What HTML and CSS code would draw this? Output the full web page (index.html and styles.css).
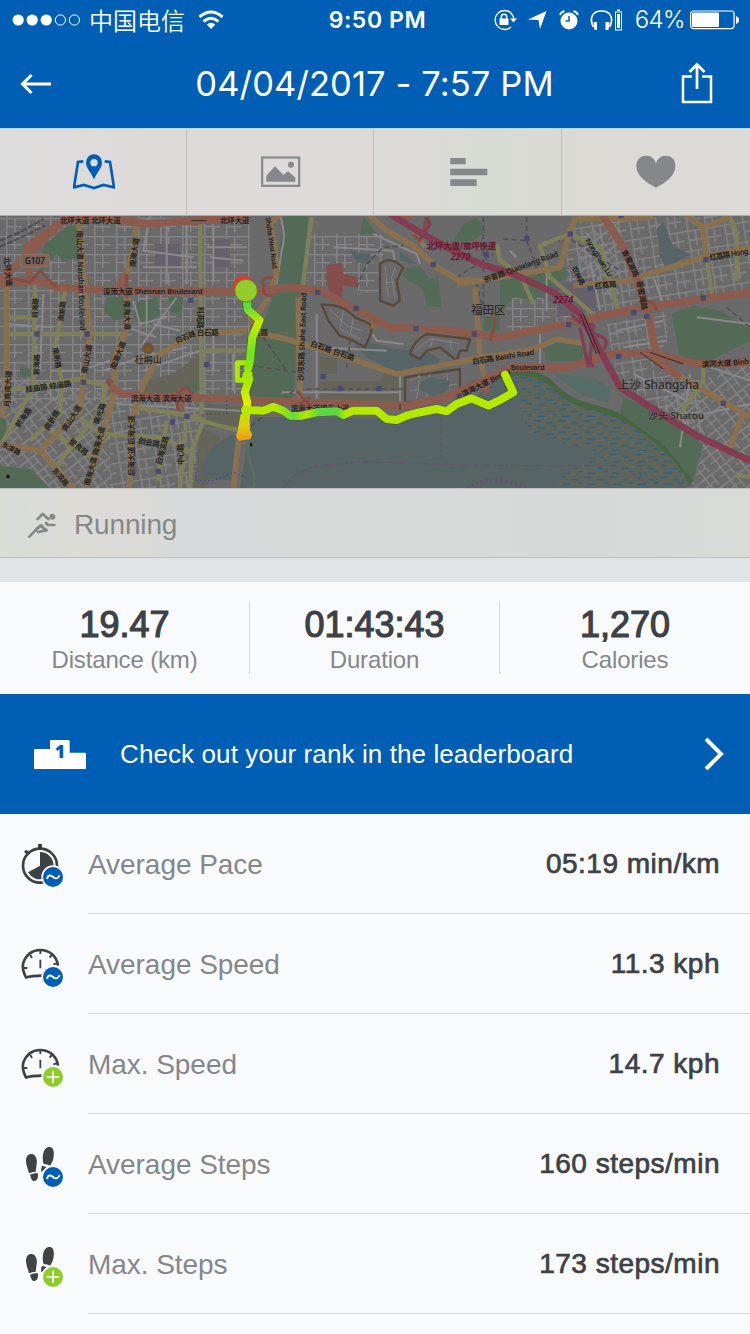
FILE: index.html
```html
<!DOCTYPE html>
<html lang="en">
<head>
<meta charset="utf-8">
<title>Running activity</title>
<link rel="stylesheet" href="styles.css">
</head>
<body>
<svg class="defs" width="0" height="0" aria-hidden="true">
  <defs>
    <g id="avg"><circle cx="159" cy="549" r="35" fill="#f9fafc"/><circle cx="159" cy="549" r="30" fill="#005fb5"/><path d="M141 555C144 541 153 543 159 549S174 556 179 543" fill="none" stroke="#fff" stroke-width="5.5"/></g>
    <g id="max"><circle cx="159" cy="549" r="35" fill="#f9fafc"/><circle cx="159" cy="549" r="30" fill="#8dcc2c"/><path d="M159 530V568M140 549H178" fill="none" stroke="#fff" stroke-width="5"/></g>
    <g id="gauge"><path d="M79 552C68 532 66 517 71 503C78 483 96 468 120 468C147 468 170 484 174 515M76 551C92 546 108 545 126 545" fill="none" stroke="#3d4145" stroke-width="8"/><path d="M121 470V480M91 483L96 492M156 482L149 491M72 522H82M160 511L171 508M121 497V523" fill="none" stroke="#3d4145" stroke-width="5.5"/></g>
    <g id="feet" fill="#3f4346"><path d="M94 480C106 480 113 495 110 511C108 522 108 529 107 533Q97 534 87 538C84 525 78 513 78 500C78 488 84 480 94 480ZM90 542Q101 538 113 537C116 550 112 560 103 561C95 561 93 553 90 542Z"/><path d="M149 459C159 459 163 470 161 486C160 501 154 508 151 515Q142 510 131 510C128 503 127 489 130 477C133 466 140 458 149 459ZM126 515L142 520L124 535Q122 524 126 515Z"/></g>
  </defs>
</svg>
<main class="app">
  <header class="top">
    <div class="status">
      <div class="status-left">
        <svg width="69" height="14" viewBox="0 0 69 14"><g fill="#fff"><circle cx="6.2" cy="7" r="5.6"/><circle cx="20.2" cy="7" r="5.6"/><circle cx="34.2" cy="7" r="5.6"/></g><g fill="none" stroke="#fff"><circle cx="48.4" cy="7" r="5.1"/><circle cx="62.400" cy="7" r="5.1"/></g></svg>
        <span class="carrier">中国电信</span>
        <svg class="wifi" width="26" height="20" viewBox="0 0 26 20"><g fill="none" stroke="#fff" stroke-width="3"><path d="M1.500 7Q13-3 24.500 7"/><path d="M5.500 11.500Q13 5 20.500 11.500"/></g><path d="M8.700 14.500Q13 11 17.300 14.500L13 19Z" fill="#fff"/></svg>
      </div>
      <span class="time">9:50 PM</span>
      <div class="status-right">
        <svg class="lock" width="24" height="22" viewBox="0 0 24 22"><path d="M18 4A9.500 9.500 0 1 0 18 18M18 4Q20.800 7 20.800 11" fill="none" stroke="#fff" stroke-width="1.400"/><path d="M17 9.500H24L20.500 13.500Z" fill="#fff"/><rect x="6.500" y="9.500" width="9" height="6.500" rx=".8" fill="#fff"/><path d="M8.300 10V8A2.700 2.700 0 0 1 13.700 8V10" fill="none" stroke="#fff" stroke-width="1.500"/></svg>
        <svg class="loc" width="19" height="18" viewBox="0 0 19 18"><path d="M18.500 0L12 18L10.500 9L0 8.500Z" fill="#fff"/></svg>
        <svg class="alarm" width="20" height="20" viewBox="0 0 20 20"><circle cx="10" cy="11" r="8.500" fill="#fff"/><path d="M10 6V11H6.500" fill="none" stroke="#005fb5" stroke-width="1.500"/><path d="M1 5Q2 2 5.500 1.200M19 5Q18 2 14.500 1.200" fill="none" stroke="#fff" stroke-width="1.800"/></svg>
        <svg class="phones" width="33" height="22" viewBox="0 0 33 22"><path d="M3.500 18C-1 10 2 2 11.500 2S24 10 19.500 18" fill="none" stroke="#fff" stroke-width="1.700"/><path d="M3.500 13H7V21H4.500ZM19.500 13H15.500V21H18.500Z" fill="#fff"/><rect x="25.500" y="3" width="6" height="18" fill="none" stroke="#fff"/><path d="M27 5H30V19H27ZM27 .5H30V2H27Z" fill="#fff"/></svg>
        <span class="pct">64%</span>
        <svg width="49" height="20" viewBox="0 0 49 20"><rect x=".6" y="1" width="43.500" height="17.600" rx="3" fill="none" stroke="#fff" stroke-width="1.200"/><rect x="2" y="2.500" width="27" height="14.600" rx="1" fill="#fff"/><path d="M46 6Q49 7 49 10T46 14Z" fill="#fff"/></svg>
      </div>
    </div>
    <nav class="navbar">
      <svg width="32" height="22" viewBox="0 0 32 22"><path d="M11.500 2L2.500 11L11.500 20M2.500 11H31" fill="none" stroke="#fff" stroke-width="3"/></svg>
      <h1>04/04/2017 - 7:57 PM</h1>
      <svg class="share" width="32" height="42" viewBox="0 0 32 42"><path d="M11 14.500H2V40H30V14.500H21" fill="none" stroke="#fff" stroke-width="2.500"/><path d="M16 27V3M8.500 10L16 2.500L23.500 10" fill="none" stroke="#fff" stroke-width="2.700"/></svg>
    </nav>
  </header>

  <section class="tabs">
    <div class="tab"><svg width="42" height="36" viewBox="219 75 126 108"><path d="M250 97L234 99L222 175L252 168L282 177L310 168L342 175L330 99L314 97" fill="none" stroke="#005fb5" stroke-width="8"/><path fill-rule="evenodd" d="M282 76A24 24 0 0 0 258 101C258 117 272 128 282 151C292 128 306 117 306 101A24 24 0 0 0 282 76ZM282 90A11 11 0 1 1 282 112A11 11 0 1 1 282 90Z" fill="#005fb5"/></svg></div>
    <div class="tab"><svg width="40" height="32" viewBox="782 85 120 96"><rect x="785.500" y="89.500" width="111" height="85" fill="none" stroke="#85878a" stroke-width="6.500"/><circle cx="872" cy="111" r="9" fill="#85878a"/><path d="M798 162V144L824 116L849 142L863 131L885 150V162Z" fill="#85878a"/></svg></div>
    <div class="tab"><svg width="38" height="30" viewBox="226 88 114 90"><path d="M227 91H273V110H227ZM227 123H338V143H227ZM227 155H306V175H227Z" fill="#85878a"/></svg></div>
    <div class="tab"><svg width="40" height="34" viewBox="782 82 120 102"><path d="M842 180C812 163 783 145 783 114C783 91 801 83 814 84C830 85 840 96 842 108C844 96 854 85 870 84C883 83 900 91 900 114C900 145 872 163 842 180Z" fill="#85878a"/></svg></div>
  </section>

  <section class="map">
    <svg width="750" height="272" viewBox="0 6 2250 816">
      <defs>
        <pattern id="grid" width="66" height="54" patternUnits="userSpaceOnUse"><path d="M0 14H66M20 0V54M44 14V54M20 38H66" class="street"/></pattern>
        <pattern id="grid2" width="58" height="48" patternUnits="userSpaceOnUse" patternTransform="rotate(-38)"><path d="M0 10H58M18 0V48M40 10V48M0 32H40" class="street"/></pattern>
        <pattern id="grid3" width="56" height="60" patternUnits="userSpaceOnUse" patternTransform="rotate(-9)"><path d="M0 14H56M14 0V60M36 14V60M14 42H56" class="street"/></pattern>
        <pattern id="marsh" width="76" height="34" patternUnits="userSpaceOnUse"><path d="M4 8H26M42 15H62M14 29H40M62 25H76" stroke="#315f7c" stroke-width="4"/></pattern>
        <linearGradient id="run" gradientUnits="userSpaceOnUse" x1="0" y1="280" x2="0" y2="680"><stop offset="0" stop-color="#5edc35"/><stop offset=".12" stop-color="#c6ec00"/><stop offset=".35" stop-color="#6be51a"/><stop offset=".55" stop-color="#a8ea00"/><stop offset=".72" stop-color="#e2ee00"/><stop offset=".85" stop-color="#b2e800"/><stop offset="1" stop-color="#efa818"/></linearGradient>
        <linearGradient id="tail" gradientUnits="userSpaceOnUse" x1="0" y1="590" x2="0" y2="680"><stop offset="0" stop-color="#b9e800"/><stop offset=".5" stop-color="#dfcf08"/><stop offset="1" stop-color="#f0951e"/></linearGradient>
        <linearGradient id="east" gradientUnits="userSpaceOnUse" x1="735" y1="0" x2="2050" y2="0"><stop offset="0" stop-color="#b5e800"/><stop offset=".07" stop-color="#b5e800"/><stop offset=".11" stop-color="#63dc35"/><stop offset=".14" stop-color="#b5e800"/><stop offset=".17" stop-color="#58da40"/><stop offset=".21" stop-color="#58da40"/><stop offset=".23" stop-color="#b5e800"/><stop offset=".8" stop-color="#b5ea00"/><stop offset="1" stop-color="#d4f000"/></linearGradient>
      </defs>
      <rect y="0" width="2250" height="830" fill="#6b6a6b"/>
      <path fill="url(#grid)" d="M0 0H750V560H0ZM920 60H1150V240L920 210ZM1520 250H1740V330L1520 360Z"/>
      <path fill="url(#grid2)" d="M0 480L330 540L330 822H0ZM1740 60L1860 0V240H1740ZM1980 560L2250 430V822H2060Z"/>
      <path fill="url(#grid3)" d="M330 560H600V822H330ZM1700 20L2250 0V230L1700 310ZM1820 330L2000 290V450L1850 480ZM1840 440L2100 500L2110 660L1900 540Z"/>
      <path fill="#646558" d="M520 480L600 420V530L430 545L440 500ZM960 430H1010V480H960ZM960 500H1200V570H960ZM1145 480H1200V530H1145ZM620 570L730 580V640H620ZM600 640L660 670L620 822H580Z"/>
      <path fill="#66606a" d="M465 90H540V165H465ZM1570 230L1790 190V290L1670 310V270ZM630 80L690 75V160H640Z"/>
      <path class="park" d="M130 95L205 35H232V130L190 145L170 120L120 180ZM320 250L370 248L390 310L340 320L312 290ZM410 265L470 250L480 300L430 335L400 310ZM505 245L550 250L545 305L505 290ZM850 6H925L905 210H825ZM825 235H898L880 555L740 545L760 400ZM1090 6L1130 60L1080 60ZM1210 165L1260 155L1290 195L1315 190L1325 280L1280 275L1270 225L1210 190ZM1360 80L1390 30L1430 10L1460 50L1420 80ZM1500 180L1560 185L1680 150L1710 180L1600 260L1540 250L1500 300ZM1630 405L1670 385L1755 395L1745 440L1640 440ZM2015 300L2080 275L2160 290L2250 345V380L2110 450L2040 435ZM1450 310L1500 300V350H1450ZM0 755L90 765L150 822H0ZM0 600L20 620L15 700H0ZM555 510L600 495L590 535L550 530ZM60 460L95 465L90 490L60 485Z"/>
      <path class="water" d="M720 822L740 700L760 610L1180 612L1330 590L1430 545L1510 475L1600 480L1750 570L1860 600L1980 680L2080 800L2060 822Z"/>
      <path fill="#5e655c" d="M1550 500L1620 490L1700 545L1900 610L1990 700L2060 790V822H1660L1690 780L1820 720L1700 690L1580 655L1560 580Z"/>
      <path fill="url(#marsh)" d="M1520 490H1620L1740 575L1900 610L2070 790V822H1660L1690 780L1820 720L1700 690L1580 655L1560 560Z"/>
      <path fill="#566c66" d="M1660 480L1780 490L1830 520L1830 570L1740 540Z"/>
      <path d="M1510 480Q1600 465 1650 505Q1700 560 1760 575Q1900 605 1990 700Q2040 740 2075 805" class="coast"/>
      <path class="park" d="M1870 550L1970 590L2110 690L2080 800L1990 690L1860 600Z"/>
      <path class="water" d="M1040 92L1070 115L1110 120L1115 150L1070 145ZM1200 110L1220 125L1250 150L1200 140ZM1065 395L1100 385L1200 408L1270 405L1320 435L1310 465L1200 480L1100 430ZM1970 45L1990 25L2020 100L2070 120L2000 165L1980 130ZM620 720L650 690L700 660L720 680V740L700 800L600 790Z"/>
      <path d="M840 6Q860 60 845 110L830 210M905 290L898 560M845 535H1200V590M950 300V560M1200 480V590M1380 465V555M150 470H240L330 440M630 130L730 140M450 6L430 110L580 130M500 30V210M560 10V210M430 160H590M640 40V200M620 100H740M420 400L530 250M20 330L160 340M130 240L120 470M400 260L420 330L500 310M310 470L420 430L560 400M430 470L600 410M350 570L720 590M1120 60L1250 120L1260 150M1000 100L1180 110L1190 200M1640 150V290M1770 140L1800 290M1530 110L1550 130M1960 190L1990 270M2090 310L2250 330M2040 430L2250 500M1620 360V460M700 420V530M640 340V470" class="minor"/>
      <path d="M440 230V340M460 330L540 350M240 230L250 330M380 340L470 370M950 400L1160 410M1110 350L1130 380L1210 390M1900 480L2080 570M1850 350L1990 320M1870 400L2000 380M2070 480L2040 700M2110 600L2250 570" class="minor"/>
      <g class="dash"><path d="M1580 10V80L1500 75M1580 80L1620 190M1450 10V290L1430 210M1070 220L1100 150L1150 100L1210 95M1060 300L1040 460M750 455L900 475M790 370L860 470M920 525L1240 525L1270 555M1370 190L1480 120M880 530L750 640M1640 80H1720L1860 170M2180 280L2250 340"/></g>
      <g class="tan"><path d="M1140 150Q1160 130 1190 145L1210 160L1190 200L1200 260L1180 275L1140 260Z"/><path d="M965 272Q1030 270 1065 310L1110 330L1115 355L1095 400L1060 380L1020 365L985 320Z"/><path d="M1230 420Q1240 380 1280 360L1410 375L1400 410L1380 410L1370 440L1320 400L1280 410L1260 435Z"/><path d="M1215 490L1380 465V545L1300 560L1215 565Z"/></g>
      <path class="lanes" d="M1155 155L1165 250M1185 160L1175 190L1185 255M1155 205H1180M990 285L1040 335L1090 350M1030 290L1020 345L1080 375M1060 315L1050 365M1245 410L1290 375L1330 380L1380 390M1300 370L1290 400M1350 378L1355 410M1230 500L1260 485L1250 555M1290 480L1280 550M1340 480L1350 540M1230 530L1370 510"/>
      <path class="water" d="M1265 505L1290 490L1350 500L1345 530L1300 545L1255 525Z"/>
      <path fill="#844c4b" d="M980 155L1025 145L1030 180L1075 190L1070 220L1030 215L1025 250L990 245L980 200Z"/>
      <g class="yellow"><path d="M600 20L605 600M105 210L100 520L5 690M195 230L175 350L165 400L185 500L180 600L90 680M20 360L380 360M30 310H100M10 530L100 520L230 495L320 515L300 590L165 760M610 410H740M400 580L540 600L640 630L740 655M240 610L300 660L480 670L570 710M580 600L610 620L575 710L570 822M500 620L475 800M560 600L540 822M150 650L290 740M935 10L905 240M1275 100L1240 50M1600 270L1560 180L1500 140L1490 90M1630 90L1710 60L1800 100L1855 290M1650 190L1620 95L1640 90M2110 60L2135 240M2190 10L2210 60V200M2040 600L2110 500V460M1620 95L1650 190L1785 305M2205 780L2250 790"/></g>
      <g class="orange"><path d="M235 20L255 220L270 360L250 500L240 590L120 710L0 690M410 10L405 90L375 200L385 330L345 430L340 540L310 660L260 822M20 160L20 560L0 610M740 350L580 360L480 420L430 510L395 620L388 822M120 710L220 822M750 355L840 370L1010 420L1190 480L1450 430L1600 405L1670 375L1755 390M840 0L810 30L825 100L830 180L800 260L750 330M895 250L900 560M1110 6L1160 50L1240 95L1310 160L1380 200H1440L1680 160L1710 50L1725 15L1960 10M1370 210L1470 195M1720 215L1880 200L2110 130L2250 100M2060 6L2110 40L2190 10M1425 220L1440 430L1460 520M2000 460L2080 510L2250 610M2230 600L2190 700M720 640L700 822M2110 40L2120 130"/></g>
      <g class="red"><path d="M0 210L110 200L170 220L300 228L750 235L870 220L960 230L1170 340L1300 345L1500 370L1700 330L1900 285L2250 235M90 200L80 100L190 20L0 200M20 210V160M190 15L390 20L430 30L750 10M330 520L370 540L500 550L740 555L760 560L1220 575L1340 550L1450 500L1540 460L1700 460L1840 420L1940 415L2090 450L2250 445M905 555L910 580M1805 0L1870 100L1920 220L1945 300L1970 430M380 180L360 210L390 240M1940 415L2040 490M540 590L545 530L570 545M1180 6H1240M1450 500L1460 540"/></g>
      <g class="redthin"><path d="M20 190L90 205L120 170L170 220M380 180V245L360 220M330 515Q310 490 340 505M535 590Q520 530 560 520L580 540M820 190Q770 190 795 220M820 245Q780 245 795 220M890 530L935 580M900 570L930 550M1920 265Q1960 250 1970 290M1470 380Q1500 300 1470 310M1280 10L1260 80L1240 60"/></g>
      <g class="magenta"><path d="M1170 0L1260 55L1360 110L1440 150L1540 180L1660 235L1740 300L1790 390L1860 520L2000 610L2100 670L2250 740"/><path class="ramp" d="M1715 300Q1740 340 1780 330M1740 340L1765 460M1780 330L1770 440M1780 360Q1830 370 1815 400L1795 420M1755 420L1780 460M1260 75L1290 30L1280 10"/></g>
      <path d="M0 80L60 55L130 15M0 98L60 72L135 35" class="rail"/>
      <path d="M1740 300L1790 420M1750 300L1800 420M1920 415L1990 465M1950 415L2050 450M1200 570V590M620 20H575" class="darkline"/>
      <g class="boundary"><path d="M1324 610V745M850 820L890 780L940 757L1100 743L1400 753L1860 757L1930 800L1950 822"/><path class="thick" d="M1400 822L1450 800L1510 798L1580 822"/></g>
      <g class="blue-dots"><path d="M620 600H680V545M585 750L590 800L640 800L700 775L740 790"/></g>
      <path d="M755 650Q735 700 755 760T750 822" fill="none" stroke="#566f5c" stroke-width="10"/>
      <g fill="#494a70"><path d="M103 352h16v16h-16zM253 352h16v16h-16zM564 251h16v16h-16zM612 444h16v16h-16zM242 497h16v16h-16zM509 616h16v16h-16zM553 599h16v16h-16zM467 764h16v16h-16zM945 227h16v16h-16zM1060 275h16v16h-16zM1240 336h16v16h-16zM1292 144h16v16h-16zM1451 113h16v16h-16zM1415 352h16v16h-16zM962 480h16v16h-16zM1012 516h16v16h-16zM1129 516h16v16h-16zM1370 538h16v16h-16zM1573 66h16v16h-16zM1703 52h16v16h-16zM1763 215h16v16h-16zM1698 324h16v16h-16zM1893 288h16v16h-16zM1932 299h16v16h-16zM1848 419h16v16h-16zM2110 129h16v16h-16zM2102 244h16v16h-16zM2162 560h16v16h-16zM1855 0h16v12h-16z"/></g>
      <circle cx="444" cy="403" r="17" fill="#69533c"/><circle cx="444" cy="406" r="9" fill="#805717"/><path d="M1115 325L1125 340L1110 345Z" fill="#a0691c"/>
      <rect x="60" y="121" width="88" height="38" rx="6" fill="#806359" stroke="#8d7568" stroke-width="3"/>
      <g class="labels">
        <text x="74" y="149" font-size="25">G107</text>
        <text x="180" y="28">北环大道 北环大道</text><text x="660" y="28">北环大道</text>
        <text transform="translate(230 50) rotate(88)" textLength="300">南山大道 Nanshan Boulevard</text>
        <text transform="translate(405 160) rotate(-82)">南海大道</text>
        <text transform="translate(12 130) rotate(85)">北环大道</text>
        <text x="310" y="239" textLength="298">深南大道 Shennan Boulevard</text>
        <text transform="translate(112 312) rotate(-88)" font-size="20">前海路</text><text transform="translate(190 322) rotate(-84)" font-size="20">南新路</text>
        <text transform="translate(372 260) rotate(88)">南海大道</text><text transform="translate(593 278) rotate(90)">科苑路</text>
        <text transform="translate(530 388) rotate(-22)" font-size="21">白石路</text><text x="590" y="363">白石路</text>
        <text transform="translate(345 468) rotate(-68)">南海大道</text><text transform="translate(260 480) rotate(-80)">南山大道</text>
        <text transform="translate(116 484) rotate(-88)" font-size="21">前海路</text><text transform="translate(158 402) rotate(80)" font-size="21">南新路</text>
        <text transform="translate(30 580) rotate(-88)">月亮湾大道</text><text transform="translate(78 535) rotate(-8)">桂庙路 桂庙路</text>
        <text x="393" y="560">滨海大道 滨海大道</text>
        <text transform="translate(58 642) rotate(-55)">前海路</text><text transform="translate(145 650) rotate(-58)">南新路</text><text transform="translate(197 654) rotate(-57)">南山大道</text>
        <text transform="translate(295 632) rotate(-70)">南光路</text><text transform="translate(205 685) rotate(39)">登良路</text><text transform="translate(4 697) rotate(26)" font-size="20">东滨路</text>
        <text transform="translate(155 770) rotate(49)" font-size="21">东滨路</text><text transform="translate(268 816) rotate(-75)">南海大道 南海大道</text>
        <text transform="translate(403 786) rotate(-90)">后海大道 后海大道</text><text transform="translate(413 686) rotate(12)">创业路</text>
        <text transform="translate(483 754) rotate(-75)">后海滨路</text><text transform="translate(550 752) rotate(-90)" font-size="21">中心路</text>
        <text x="404" y="448" font-size="27" class="place">杜鹃山</text>
        <text transform="translate(797 12) rotate(82)" font-size="19" textLength="154">Shahe West Road</text>
        <text transform="translate(910 502) rotate(-88)" textLength="265">沙河东路 Shahe East Road</text>
        <text transform="translate(930 395) rotate(19)">白石路 白石路</text><text transform="translate(760 362)">石路</text>
        <text x="872" y="590">滨海大道滨海大道</text>
        <text transform="translate(1418 451) rotate(-9)" textLength="188">白石路 Baishi Road</text>
        <text transform="translate(1390 548) rotate(-26)">滨海大道 Binhai</text><text transform="translate(1532 468)" font-size="21">Boulevard</text>
        <text transform="translate(1455 206) rotate(-20)" textLength="235">侨香路 Qiaoxiang Road</text>
        <text transform="translate(1755 80) rotate(57)" textLength="130">NongYuan Lu</text><text transform="translate(1715 162) rotate(63)" font-size="20">农林路</text>
        <text transform="translate(1785 224) rotate(-6)">红荔路</text><text transform="translate(1865 112) rotate(64)">香蜜湖路</text><text transform="translate(1910 202) rotate(79)">香蜜湖路</text>
        <text transform="translate(2130 139) rotate(-10)" textLength="118">红荔路 Hong</text><text transform="translate(2106 460) rotate(-4)" textLength="142">滨河大道 Binh</text>
        <g class="route-label"><text x="1280" y="104" textLength="208" lengthAdjust="spacingAndGlyphs">北环大道/南坪快速</text><text class="num" x="1352" y="138">2270</text><text class="num" x="1660" y="266">2274</text></g>
        <g class="place"><text x="1414" y="299" font-size="34">福田区</text><text x="1853" y="526" font-size="35" textLength="244" lengthAdjust="spacingAndGlyphs">上沙 Shangsha</text><text x="1944" y="616" font-size="28" textLength="168" lengthAdjust="spacingAndGlyphs">沙头 Shatou</text></g>
      </g>
      <path d="M20 785L28 790M750 692H757" stroke="#171817" stroke-width="10"/>
      <circle cx="731" cy="218" r="33" fill="#dc3b30"/>
      <path class="trail trail-shadow" d="M740 260L744 288L779 318L757 370L750 440M748 500L734 535L742 565L738 608L728 655M735 588L790 590L820 578L850 590L870 605L900 606L950 595L1010 592L1030 603L1060 590L1130 590L1160 615L1190 618L1220 605L1250 597L1310 585L1340 592L1370 570L1415 553L1465 575L1500 558L1540 535L1515 482"/>
      <path class="trail loop" d="M750 446H712V499H732L736 480H750"/>
      <path class="trail" stroke="url(#run)" d="M740 260L744 288L779 318L757 370L750 440L744 464M748 495L734 535L742 565L738 608L730 655"/>
      <path d="M722 600L748 600L750 650Q762 662 750 676L718 680Q704 672 712 655Z" fill="url(#tail)"/>
      <path class="trail" stroke="url(#east)" d="M735 588L790 590L820 578L850 590L870 605L900 606L950 595L1010 592L1030 603L1060 590L1130 590L1160 615L1190 618L1220 605L1250 597L1310 585L1340 592L1370 570L1415 553L1465 575L1500 558L1540 535L1515 482"/>
      <circle cx="738" cy="230" r="34" fill="#94cb2d" stroke="#697f35" stroke-width="3"/>
    </svg>
  </section>

  <section class="sport">
    <svg width="28" height="26" viewBox="83 73 84 78"><g fill="none" stroke="#85878a" stroke-width="8" stroke-linecap="round" stroke-linejoin="round"><path d="M112 94L127 79L144 94M162 112H143L137 106M87 147L120 114L139 128L113 133"/><path d="M107 125L123 113L133 127"/></g><circle cx="156" cy="87" r="9" fill="#85878a"/></svg>
    <span>Running</span>
  </section>

  <section class="stats">
    <div class="stat"><strong>19.47</strong><span>Distance (km)</span></div>
    <div class="stat"><strong>01:43:43</strong><span>Duration</span></div>
    <div class="stat"><strong>1,270</strong><span>Calories</span></div>
  </section>

  <section class="rank">
    <svg width="52" height="29" viewBox="102 138 156 87"><path d="M102 168Q102 165 105 165H150V141Q150 138 153 138H206Q209 138 209 141V176H255Q258 176 258 179V225H102Z" fill="#fff"/><text x="180" y="191" text-anchor="middle" class="podium">1</text></svg>
    <span>Check out your rank in the leaderboard</span>
    <svg width="20" height="34" viewBox="0 0 20 34"><path d="M2 2L17 17L2 32" fill="none" stroke="#fff" stroke-width="4"/></svg>
  </section>

  <section class="metrics">
    <div class="metric"><svg viewBox="60 438 144 144"><circle cx="120" cy="515" r="51" fill="none" stroke="#3d4145" stroke-width="8"/><path d="M120 515V474A41 41 0 1 1 84 535Z" fill="#3d4145"/><path d="M114 450H126V465H114ZM72 473L79 467L91 477L83 485Z" fill="#3d4145"/><use href="#avg"/></svg><div class="line"><span>Average Pace</span><b>05:19 min/km</b></div></div>
    <div class="metric"><svg viewBox="60 438 144 144"><use href="#gauge"/><use href="#avg"/></svg><div class="line"><span>Average Speed</span><b>11.3 kph</b></div></div>
    <div class="metric"><svg viewBox="60 438 144 144"><use href="#gauge"/><use href="#max"/></svg><div class="line"><span>Max. Speed</span><b>14.7 kph</b></div></div>
    <div class="metric"><svg viewBox="60 438 144 144"><use href="#feet"/><use href="#avg"/></svg><div class="line"><span>Average Steps</span><b>160 steps/min</b></div></div>
    <div class="metric"><svg viewBox="60 438 144 144"><use href="#feet"/><use href="#max"/></svg><div class="line"><span>Max. Steps</span><b>173 steps/min</b></div></div>
  </section>
</main>
</body>
</html>
```

FILE: styles.css
```css
* { box-sizing: border-box; }
body { margin: 0; background: #f9fafc; font-family: "Liberation Sans", "Noto Sans CJK SC", sans-serif; }
svg { display: block; flex: none; }
.defs { position: absolute; }
.app { width: 750px; height: 1334px; overflow: hidden; }

.top { height: 128px; background: #005fb5; color: #fff; font-family: Inter, "Noto Sans CJK SC", sans-serif; }
.status { height: 40px; display: grid; grid-template-columns: 1fr auto 1fr; align-items: center; padding: 0 11px 0 12px; }
.status-left, .status-right { display: flex; align-items: center; }
.status-right { justify-content: flex-end; }
.carrier { margin-left: 8px; font-size: 24px; line-height: 38px; font-weight: 350; font-family: "Noto Sans CJK SC", sans-serif; }
.wifi { margin-left: 13px; }
.time { font-size: 23px; font-weight: 600; letter-spacing: .6px; line-height: 40px; padding: 0 0 0 4px; }
.loc { margin-left: 11px; }
.alarm { margin-left: 12px; }
.phones { margin-left: 11px; }
.pct { margin: 0 5px 0 12px; font-size: 24px; line-height: 40px; font-weight: 350; letter-spacing: -.6px; }
.navbar { height: 88px; display: flex; justify-content: space-between; align-items: center; padding: 0 37px 0 20px; }
.navbar h1 { margin: 0 0 0 16px; font-size: 34.5px; font-weight: 400; line-height: 44px; letter-spacing: .1px; }
.share { margin-top: -2px; }

.tabs { height: 88px; display: grid; grid-template-columns: 187px 187px 188px 188px; border-top: 1px solid #b5d9f3; border-bottom: 1px solid #aaaaa8; background: linear-gradient(90deg, #dddddd, #dedad9 18%, #dedad9 47%, #d8dbd4 65%, #dcdad6 82%, #dcdbd7); }
.tab { display: flex; align-items: center; justify-content: center; border-right: 1px solid #bdbdbb; padding-left: 2px; }
.tab:last-child { border-right: 0; padding-left: 0; }

.map { height: 272px; overflow: hidden; }
.street { fill: none; stroke: #858587; stroke-width: 4; }
.minor { fill: none; stroke: #89898b; stroke-width: 6; stroke-linejoin: round; }
.lanes { fill: none; stroke: #828285; stroke-width: 3; }
.park { fill: #536b56; }
.water { fill: #566466; }
.coast { fill: none; stroke: #466641; stroke-width: 17; }
.dash { fill: none; stroke: #505052; stroke-width: 5; stroke-dasharray: 15 10; }
.tan { fill: #69686a; stroke: #57493a; stroke-width: 7; stroke-linejoin: round; }
.yellow { fill: none; stroke: #7e8059; stroke-width: 13; stroke-linejoin: round; }
.orange { fill: none; stroke: #89704f; stroke-width: 17; stroke-linejoin: round; }
.red { fill: none; stroke: #8b5b4e; stroke-width: 23; stroke-linejoin: round; }
.redthin { fill: none; stroke: #834d45; stroke-width: 9; }
.magenta { fill: none; stroke: #833c52; stroke-width: 20; stroke-linejoin: round; }
.ramp { stroke-width: 10; }
.rail { fill: none; stroke: #4c4c50; stroke-width: 6; stroke-dasharray: 18 5; }
.darkline { fill: none; stroke: #332727; stroke-width: 3; }
.boundary { fill: none; stroke: #66526c; stroke-width: 4; stroke-dasharray: 18 7 5 7; }
.thick { stroke-width: 9; stroke-dasharray: 8 7; }
.blue-dots { fill: none; stroke: #404880; stroke-width: 4; stroke-dasharray: 4 8; }
.labels { font-family: "Noto Sans", "Noto Sans CJK SC", sans-serif; font-size: 22px; font-weight: 500; fill: #211f1d; stroke: #211f1d; stroke-width: .5px; }
.place { fill: #2b2929; stroke: #77777766; stroke-width: 3px; paint-order: stroke; }
.route-label { font-size: 25px; fill: #6a1731; stroke: #6a1731; stroke-width: .8px; }
.num { font-size: 27px; font-style: italic; }
.trail { fill: none; stroke-width: 24; stroke-linecap: round; stroke-linejoin: round; }
.trail-shadow { stroke: #404b2b80; stroke-width: 28; }
.loop { stroke: #a8ea00; stroke-width: 15; }

.sport { height: 70px; display: flex; align-items: center; gap: 18px; padding: 3px 0 0 28px; border-top: 1px solid #bdc0bf; border-bottom: 1px solid #babfc0; background: linear-gradient(90deg, #d8ddd6, #dcdbd6 10%, #dcdad6 16%, #d7dada 25%, #d5dad9 80%, #dadbd8); color: #85878a; font-size: 28px; }
.sport span { line-height: 34px; margin-top: 1px; letter-spacing: -.15px; }
.stats { height: 136px; border-top: 24px solid #e1e4e7; display: grid; grid-template-columns: 250px 250px 250px; align-items: center; background: #f9fafc; }
.stat { height: 72px; display: flex; flex-direction: column; align-items: center; border-right: 1px solid #d3d5d7; }
.stat:last-child { border-right: 0; }
.stat strong { font-size: 36px; line-height: 42px; font-weight: 400; color: #3d4145; -webkit-text-stroke: 1.2px #3d4145; margin-top: 2px; }
.stat span { font-size: 24px; line-height: 28px; letter-spacing: -.15px; color: #85878a; }

.rank { height: 120px; background: #005fb5; color: #fff; display: flex; align-items: center; padding: 0 26px 0 34px; }
.rank span { margin-left: 34px; flex: 1; font-size: 26px; line-height: 32px; letter-spacing: .1px; white-space: nowrap; }
.podium { font: 800 54px "Open Sans", sans-serif; fill: #005fb5; }

.metric { height: 100px; display: flex; padding-left: 20px; }
.metric svg { width: 48px; height: 48px; margin-top: 26px; }
.line { margin-left: 20px; flex: 1; display: flex; align-items: center; justify-content: space-between; border-bottom: 1px solid #d4d6d8; padding: 2px 30px 0 0; font-size: 28px; line-height: 34px; color: #85878a; }
.line span { letter-spacing: -.05px; }
.line b { font-weight: 400; color: #3d4145; -webkit-text-stroke: .7px #3d4145; letter-spacing: .5px; margin-top: -2px; }
```
